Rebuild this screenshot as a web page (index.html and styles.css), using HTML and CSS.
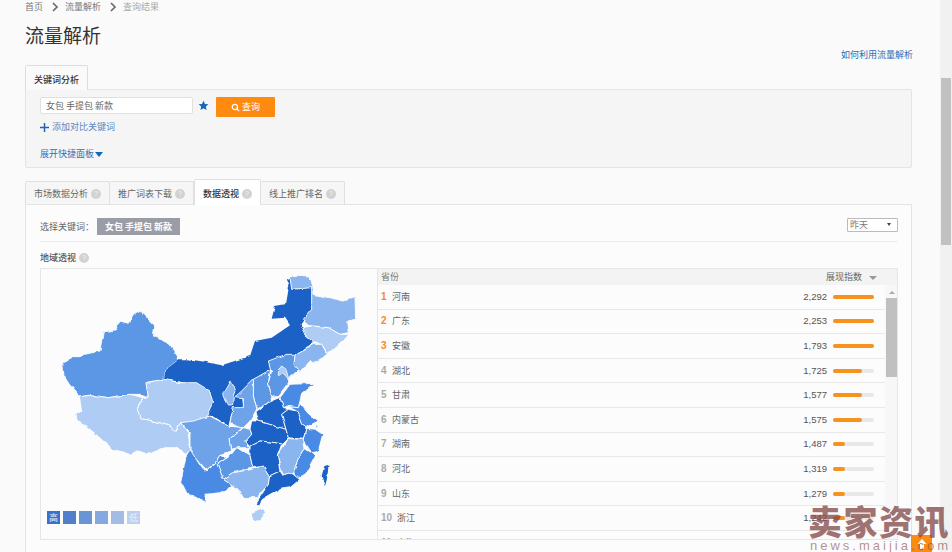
FILE: index.html
```html
<!DOCTYPE html>
<html lang="zh-CN">
<head>
<meta charset="utf-8">
<title>流量解析</title>
<link rel="stylesheet" href="styles.css">
</head>
<body>
<div class="page">
  <main class="main">
    <nav class="crumbs">
      <a>首页</a>
      <svg class="chev" viewBox="0 0 8 10"><path d="M2 1l4 4-4 4" /></svg>
      <a>流量解析</a>
      <svg class="chev" viewBox="0 0 8 10"><path d="M2 1l4 4-4 4" /></svg>
      <span class="crumb-last">查询结果</span>
    </nav>
    <div class="title-row">
      <h1>流量解析</h1>
      <a class="help-link">如何利用流量解析</a>
    </div>
    <div class="top-tabs"><div class="top-tab">关键词分析</div></div>
    <section class="query-panel">
      <div class="query-row">
        <div class="kw-input">女包 手提包 新款</div>
        <svg class="star" viewBox="0 0 24 24"><path d="M12 1.5l3.2 7 7.6.8-5.7 5.1 1.6 7.5L12 18l-6.700 3.900 1.600-7.500L1.200 9.300l7.600-.8z"/></svg>
        <button class="query-btn">
          <svg viewBox="0 0 12 12"><circle cx="5.200" cy="5.200" r="3.500"/><path d="M7.800 7.800l3 3"/></svg>
          查询
        </button>
      </div>
      <a class="add-link"><svg viewBox="0 0 9 9"><path d="M4.500 0v9M0 4.500h9"/></svg>添加对比关键词</a>
      <a class="expand-link">展开快捷面板<i class="tri"></i></a>
    </section>
    <div class="tabs">
      <div class="tab">市场数据分析<i class="q">?</i></div>
      <div class="tab">推广词表下载<i class="q">?</i></div>
      <div class="tab active">数据透视<i class="q">?</i></div>
      <div class="tab">线上推广排名<i class="q">?</i></div>
    </div>
    <section class="content">
      <div class="select-row">
        <span class="select-label">选择关键词：</span>
        <span class="pill">女包 手提包 新款</span>
        <div class="date-select">昨天<i class="mini-tri"></i></div>
      </div>
      <h2 class="sub-title">地域透视<i class="q">?</i></h2>
      <div class="geo">
        <div class="map">
          <svg class="map-svg" viewBox="40 268 337 272">
            <defs>
              <filter id="rough" filterUnits="userSpaceOnUse" x="40" y="268" width="337" height="272">
                <feTurbulence type="fractalNoise" baseFrequency="0.11" numOctaves="2" seed="4" result="n"/>
                <feDisplacementMap in="SourceGraphic" in2="n" scale="4" xChannelSelector="R" yChannelSelector="G"/>
                <feGaussianBlur stdDeviation="0.25"/>
              </filter>
            </defs>
            <g filter="url(#rough)">
            <g transform="translate(40 265) scale(.33333)">
              <path class="c3" d="M68 290L100 272L120 272L135 265L180 255L190 200L225 195L240 165L265 172L280 145L300 133L345 180L340 210L390 235L418 280L375 312L372 340L318 350L325 392L300 385L270 385L205 395L170 390L145 385L118 390L88 355L72 330Z"/>
              <path class="c6" d="M118 390L145 385L170 390L205 395L270 385L305 395L295 430L305 458L360 470L390 480L408 497L425 470L445 500L450 550L438 565L405 545L375 545L325 565L295 555L270 565L220 550L190 525L150 490L110 460L108 440L125 438Z"/>
            </g>
            <g transform="translate(200 265) scale(.33333)">
              <path class="c1 noline" d="M-105 312L-62 280L-40 280L0 285L65 298L150 270L165 225L215 215L270 178L255 155L215 158L225 120L255 115L265 55L258 42L270 35L275 70L335 65L335 130L305 175L315 210L340 230L285 265L258 265L205 285L212 310L160 340L125 375L130 425L100 425L85 480L40 450L20 450L-5 395L-40 350L-108 340Z"/>
              <path class="c6" d="M-162 350L-108 340L-60 350L-10 350L30 375L38 410L20 450L0 470L-55 470L-75 497L-90 480L-120 470L-175 458L-185 430L-175 395L-155 392Z"/>
              <path class="c5" d="M70 380L90 345L105 375L100 390L98 420L85 420Z"/>
              <path class="c5" d="M270 35L285 28L330 30L340 70L338 85L410 100L430 105L465 92L467 160L440 165L445 200L420 205L385 185L335 180L310 160L335 130L335 65L275 70Z"/>
              <path class="c6" d="M305 185L335 180L385 185L420 205L447 205L430 225L385 265L365 235L340 230L315 210Z"/>
              <path class="c5" d="M340 235L365 235L382 265L340 290L330 285L300 320L282 295L285 265Z"/>
              <path class="c3" d="M205 285L258 265L285 265L282 295L295 310L270 330L265 350L235 390L215 395L205 350L215 315L212 310Z"/>
              <path class="c6" d="M232 315L245 300L258 310L268 345L250 325L235 328Z"/>
              <path class="c2" d="M240 395L270 355L345 352L305 385L295 425L265 422L250 428Z"/>
              <path class="c3" d="M160 340L212 310L205 350L215 395L205 410L170 430L160 390Z"/>
              <path class="c4" d="M125 375L160 340L160 390L170 430L150 465L130 485L90 470L100 425L130 425L130 395L105 392Z"/>
              <path class="c1" d="M168 437L205 410L240 395L250 428L265 430L245 445L258 490L225 480L175 465Z"/>
              <path class="c1" d="M155 465L175 465L225 480L258 490L265 515L245 535L225 530L180 525L150 540L137 525L155 505L150 490Z"/>
              <path class="c1" d="M245 445L265 430L290 435L305 475L318 485L310 520L265 515L258 490Z"/>
              <path class="c2" d="M265 422L295 425L300 410L325 440L355 465L325 480L318 485L305 475L290 435Z"/>
              <path class="c6" d="M345 478L358 475L350 490Z"/>
              <path class="c2" d="M318 487L345 490L368 505L355 555L335 560L310 522Z"/>
              <path class="c2" d="M315 548L335 560L345 570L315 625L295 635L280 615L295 580Z"/>
              <path class="c5" d="M265 518L310 520L315 548L295 580L280 620L250 630L232 570Z"/>
              <path class="c1" d="M150 540L180 525L225 530L245 535L232 570L240 615L208 630L190 600L158 605L150 570Z"/>
              <path class="c1" d="M208 630L240 615L250 630L280 620L302 638L270 665L240 670L210 685L185 700L178 722L170 708L205 655Z"/>
              <path class="c6 noline" d="M155 745L190 730L195 740L180 762L160 765Z"/>
              <path class="c1 noline" d="M370 600L385 597L382 635L375 660L362 630Z"/>
              <path class="c5" d="M70 640L100 620L155 610L190 600L208 630L205 655L170 695L130 695L115 670L97 660Z"/>
              <path class="c3" d="M52 595L90 570L110 545L150 570L158 605L100 620L70 640Z"/>
              <path class="c4" d="M90 520L130 485L150 490L155 505L137 525L150 545L110 545L95 550Z"/>
              <path class="c4" d="M-55 470L-20 465L30 450L85 480L130 485L90 520L95 555L60 565L50 590L25 610L10 605L-20 570L-30 550L-30 500Z"/>
              <path class="c2" d="M-42 570L-30 550L-5 590L10 612L25 610L50 590L60 565L80 575L52 595L70 640L97 660L60 680L15 685L15 710L0 695L-35 690L-50 660L-58 650Z"/>
            </g>
            </g>
          </svg>
          <div class="legend">
            <span class="l1">高</span><span class="l2"></span><span class="l3"></span><span class="l4"></span><span class="l5"></span><span class="l6">低</span>
          </div>
        </div>
        <div class="table">
          <div class="thead"><span>省份</span><span class="th-right">展现指数<i class="th-tri"></i></span></div>
          <div class="tbody">
            <div class="rows">
              <div class="row"><b class="rank hot">1</b><span class="name">河南</span><span class="val">2,292</span><span class="bar"><i style="width:100%"></i></span></div>
              <div class="row"><b class="rank hot">2</b><span class="name">广东</span><span class="val">2,253</span><span class="bar"><i style="width:100%"></i></span></div>
              <div class="row"><b class="rank hot">3</b><span class="name">安徽</span><span class="val">1,793</span><span class="bar"><i style="width:100%"></i></span></div>
              <div class="row"><b class="rank">4</b><span class="name">湖北</span><span class="val">1,725</span><span class="bar"><i style="width:70%"></i></span></div>
              <div class="row"><b class="rank">5</b><span class="name">甘肃</span><span class="val">1,577</span><span class="bar"><i style="width:70%"></i></span></div>
              <div class="row"><b class="rank">6</b><span class="name">内蒙古</span><span class="val">1,575</span><span class="bar"><i style="width:70%"></i></span></div>
              <div class="row"><b class="rank">7</b><span class="name">湖南</span><span class="val">1,487</span><span class="bar"><i style="width:30%"></i></span></div>
              <div class="row"><b class="rank">8</b><span class="name">河北</span><span class="val">1,319</span><span class="bar"><i style="width:30%"></i></span></div>
              <div class="row"><b class="rank">9</b><span class="name">山东</span><span class="val">1,279</span><span class="bar"><i style="width:30%"></i></span></div>
              <div class="row"><b class="rank">10</b><span class="name">浙江</span><span class="val">1,242</span><span class="bar"><i style="width:30%"></i></span></div>
              <div class="row"><b class="rank">11</b><span class="name">上海</span></div>
            </div>
            <div class="inner-scroll"><i class="up"></i><div class="inner-thumb"></div></div>
          </div>
        </div>
      </div>
    </section>
  </main>
  <aside class="scrollbar"><div class="thumb"></div></aside>
</div>
<div class="to-top"><svg viewBox="0 0 12 12"><path d="M6 1l4.500 5H8v5H4V6H1.500z"/></svg></div>
<div class="watermark"><div class="wm-big">卖家资讯</div><div class="wm-small">news.maijia.com</div></div>
</body>
</html>
```
FILE: styles.css
```css
* { box-sizing: border-box; }
html, body { margin: 0; height: 552px; overflow: hidden; }
body {
  background: #fafafa;
  color: #555;
  font-family: "Noto Sans CJK SC", "Liberation Sans", sans-serif;
  font-size: 9px;
  line-height: 12px;
}
.page { display: flex; height: 552px; position: relative; }
.main { width: 940px; padding: 0 28px 0 25px; height: 552px; overflow: hidden; flex: none; }
.scrollbar { width: 12px; background: #f1f1f1; padding: 78px 1px 0; flex: none; }
.thumb { height: 167px; background: #c1c1c1; }

.crumbs { display: flex; align-items: center; height: 13px; color: #777; font-size: 9px; }
.crumb-last { color: #aaa; }
.chev { width: 8px; height: 10px; margin: 0 6px 0 8px; fill: none; stroke: #666; stroke-width: 1.600; }

.title-row { display: flex; justify-content: space-between; height: 52px; padding-top: 9px; }
h1 { margin: 0; font-size: 19px; font-weight: 400; line-height: 26px; color: #333; }
.help-link { align-self: flex-end; color: #2a6cb5; margin: 0 -1px 4px 0; }

.top-tabs { display: flex; height: 25px; }
.top-tab {
  width: 63px; height: 25px; background: #fafafa; border: 1px solid #ddd; border-bottom: 0;
  border-radius: 2px 2px 0 0; text-align: center; line-height: 28px; color: #333; font-weight: 500;
  position: relative; z-index: 1;
}
.query-panel {
  height: 79px; margin-top: -1px; background: #f5f5f5; border: 1px solid #e4e4e4; border-radius: 2px;
  padding: 7px 14px 0; display: flex; flex-direction: column; align-items: flex-start;
}
.query-row { display: flex; align-items: flex-start; height: 20px; }
.kw-input {
  width: 153px; height: 17px; background: #fff; border: 1px solid #e0e0e0; border-radius: 2px;
  padding-left: 5px; line-height: 15px; color: #666;
}
.star { width: 11px; height: 11px; margin: 3px 7px 0 5px; fill: #1366bd; }
.query-btn {
  width: 59px; height: 20px; background: #ff8a10; border: 0; border-radius: 1px; color: #fff;
  font: inherit; display: flex; align-items: center; justify-content: center; gap: 2px; padding: 0;
}
.query-btn svg { width: 9px; height: 9px; fill: none; stroke: #fff; stroke-width: 1.600; }
.add-link { display: flex; align-items: center; gap: 3px; margin-top: 4px; height: 12px; color: #5b88c4; }
.add-link svg { width: 9px; height: 9px; stroke: #1b63bb; stroke-width: 1.500; }
.expand-link { display: flex; align-items: center; margin-top: 15px; height: 12px; color: #2f6fbb; }
.tri { width: 0; height: 0; border: 4px solid transparent; border-top: 5px solid #1366bd; border-bottom: 0; margin-left: 1px; }

.tabs { display: flex; align-items: flex-end; height: 26px; margin-top: 11px; position: relative; z-index: 1; margin-bottom: -1px; }
.tab {
  height: 24px; padding-top: 4px; background: #f6f6f6; border: 1px solid #e0e0e0; border-bottom: 1px solid #e4e4e4;
  border-left: 0; border-radius: 2px 2px 0 0; color: #666; line-height: 15px; width: 84px; text-align: center;
  display: flex; justify-content: center; align-items: flex-start; gap: 3px;
}
.tab:first-child { border-left: 1px solid #e0e0e0; width: 85px; }
.tab.active {
  width: 67px; height: 26px; padding-top: 6px; background: #fff; border-bottom: 0; color: #333; font-weight: 500;
  border-left: 1px solid #e0e0e0;
}
.q {
  width: 10px; height: 10px; border-radius: 50%; background: #d2d2d2; color: #f2f2f2; font-style: normal;
  font-size: 7px; line-height: 10px; text-align: center; display: inline-block; margin-top: 3px; font-weight: 400;
  font-family: "Liberation Sans", sans-serif;
}
.content {
  height: 352px; background: #fcfcfc; border: 1px solid #e4e4e4; border-bottom: 0; padding: 13px 13px 0 14px;
}
.select-row { display: flex; align-items: flex-start; height: 24px; border-bottom: 1px solid #ececec; }
.select-label { margin-top: 3px; width: 57px; color: #666; }
.pill {
  width: 83px; height: 17px; background: #9a9ca6; color: #fff; font-weight: 700; text-align: center; line-height: 17px;
}
.date-select {
  margin-left: auto; width: 51px; height: 14px; background: #fff; border: 1px solid #bbb; border-radius: 1px;
  color: #777; line-height: 12px; padding-left: 2px; position: relative;
}
.mini-tri {
  position: absolute; right: 6px; top: 4px; width: 0; height: 0;
  border: 2px solid transparent; border-top: 3px solid #444; border-bottom: 0;
}
.sub-title {
  margin: 0; height: 26px; padding-top: 10px; font-size: 9px; font-weight: 500; color: #555; display: flex; gap: 3px;
  line-height: 12px;
}
.sub-title .q { margin-top: 1px; }
.geo { display: flex; height: 272px; border: 1px solid #e6e6e6; background: #fcfcfc; width: 858px; }
.map { width: 337px; flex: none; position: relative; margin-left: -1px; }
.map-svg { width: 337px; height: 272px; display: block; }
.map-svg path { stroke: #fff; stroke-width: 2.600; stroke-linejoin: round; }
.map-svg path.noline { stroke: none; }
.c1 { fill: #1a62c6; }
.c2 { fill: #4a8be4; }
.c3 { fill: #5b97e6; }
.c4 { fill: #6ea2e9; }
.c5 { fill: #8ab5ef; }
.c6 { fill: #afccf4; }
.legend { position: absolute; left: 7px; top: 242px; display: flex; gap: 3px; }
.legend span { width: 13px; height: 13px; color: #e8eefc; font-size: 9px; line-height: 13px; text-align: center; }
.l1 { background: #3a72c9; }
.l2 { background: #5080cc; }
.l3 { background: #6a94d4; }
.l4 { background: #85a8de; }
.l5 { background: #a2bce6; }
.l6 { background: #bdd0ee; }

.table { flex: 1; min-width: 0; border-left: 1px solid #e6e6e6; display: flex; flex-direction: column; overflow: hidden; }
.thead {
  height: 16px; flex: none; background: #f3f3f3; display: flex; justify-content: space-between;
  padding: 2px 20px 0 3px; color: #777;
}
.th-right { display: flex; align-items: flex-start; gap: 7px; color: #666; }
.th-tri { width: 0; height: 0; border: 4px solid transparent; border-top: 4px solid #999; border-bottom: 0; margin-top: 5px; }
.tbody { display: flex; flex: 1; min-height: 0; }
.rows { width: 507px; flex: none; }
.row {
  height: 24.600px; display: flex; align-items: center; border-bottom: 1px solid #e8e8e8; padding-left: 3px;
  color: #666;
}
.rank { width: 11px; font-family: "Liberation Sans", sans-serif; font-size: 10px; color: #aaa; flex: none; }
.rank.hot { color: #f58a25; }
.row:nth-child(n+10) .rank { width: 16px; }
.name { flex: 1; color: #666; }
.val { font-family: "Liberation Sans", sans-serif; font-size: 9.500px; color: #555; margin-right: 6px; }
.bar { width: 41px; height: 4px; background: #e8e8e8; border-radius: 2px; margin-right: 11px; flex: none; display: block; }
.bar i { display: block; height: 4px; background: #f6921e; border-radius: 2px; }
.inner-scroll { width: 13px; flex: none; background: #f7f7f7; padding: 6px 1px 0; }
.up { display: block; width: 0; height: 0; margin: 0 auto 4px; border: 3px solid transparent; border-bottom: 3px solid #aaa; border-top: 0; }
.inner-thumb { height: 79px; background: #c0c0c0; }

.to-top { position: absolute; left: 911px; top: 535px; width: 21px; height: 17px; background: #f98c14; display: flex; justify-content: center; padding-top: 3px; }
.to-top svg { width: 12px; height: 12px; fill: #fff; }
.watermark { position: absolute; left: 808px; top: 506px; width: 144px; color: rgba(130, 70, 70, .75); }
.wm-big { font-size: 34px; line-height: 30px; font-weight: 900; letter-spacing: 1.500px; white-space: nowrap; }
.wm-small { font-family: "Liberation Sans", sans-serif; font-size: 13px; line-height: 15px; margin-top: 2px; padding-left: 2px; letter-spacing: 3px; white-space: nowrap; color: rgba(130, 70, 70, .6); }
```
